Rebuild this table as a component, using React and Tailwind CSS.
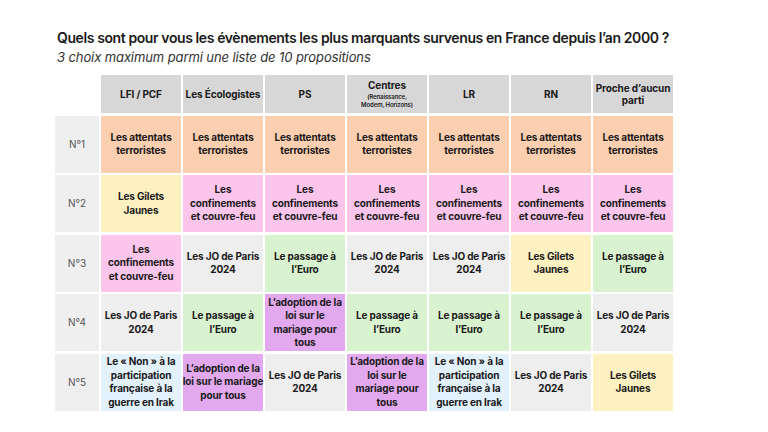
const COLS = [
  { key: "lfi", label: ["LFI / PCF"] },
  { key: "eco", label: ["Les Écologistes"] },
  { key: "ps", label: ["PS"] },
  { key: "centres", label: ["Centres"], sub: ["(Renaissance,", "Modem, Horizons)"] },
  { key: "lr", label: ["LR"] },
  { key: "rn", label: ["RN"] },
  { key: "proche", label: ["Proche d’aucun", "parti"] },
];

/* ─── Answer kinds: text lines + cell colour ───────────────── */
const A = {
  att: { lines: ["Les attentats", "terroristes"], bg: "bg-[#fdcfb1]" },
  gil: { lines: ["Les Gilets", "Jaunes"], bg: "bg-[#fef1c1]" },
  conf: { lines: ["Les", "confinements", "et couvre-feu"], bg: "bg-[#fcc5ec]" },
  jo: { lines: ["Les JO de Paris", "2024"], bg: "bg-[#eeeeee]" },
  euro: { lines: ["Le passage à", "l’Euro"], bg: "bg-[#d9f2d0]" },
  mar4: { lines: ["L’adoption de la", "loi sur le", "mariage pour", "tous"], bg: "bg-[#e3a9ee]" },
  mar3: { lines: ["L’adoption de la", "loi sur le mariage", "pour tous"], bg: "bg-[#e3a9ee]" },
  non: { lines: ["Le « Non » à la", "participation", "française à la", "guerre en Irak"], bg: "bg-[#e3f1fc]" },
};

const ROWS = [
  ["att", "att", "att", "att", "att", "att", "att"],
  ["gil", "conf", "conf", "conf", "conf", "conf", "conf"],
  ["conf", "jo", "euro", "jo", "jo", "gil", "euro"],
  ["jo", "euro", "mar4", "euro", "euro", "euro", "jo"],
  ["non", "mar3", "jo", "mar4", "non", "jo", "gil"],
];

function Lines({ lines }) {
  return lines.map((l, i) => <span key={i} className="block whitespace-nowrap">{l}</span>);
}

export default function App() {
  return (
    <div className="w-[768px] h-[432px] bg-white font-['Inter','Liberation_Sans',sans-serif] text-[#1a1a1a]">
      <div className="pl-[57px] pt-[28px]">
        <h1 className="text-[14px] leading-[20px] font-semibold tracking-[-0.4px]">
          Quels sont pour vous les évènements les plus marquants survenus en France depuis l’an 2000 ?
        </h1>
        <p className="text-[13px] leading-[18px] italic text-[#333] tracking-[-0.1px]">
          3 choix maximum parmi une liste de 10 propositions
        </p>
      </div>

      <div className="ml-[55px] mt-[9px] grid grid-cols-[44px_repeat(7,80px)] grid-rows-[38px_repeat(5,57px)] gap-x-[2px] gap-y-[2.5px] w-max">
        {/* header row */}
        <div />
        {COLS.map(c => (
          <div key={c.key} className="bg-[#d7d7d7] flex flex-col items-center justify-center text-center text-[10px] leading-[12.5px] font-bold tracking-[-0.1px]">
            <Lines lines={c.label} />
            {c.sub && (
              <div className="text-[6px] leading-[8px] font-semibold mt-[1px]">
                <Lines lines={c.sub} />
              </div>
            )}
          </div>
        ))}

        {/* answer rows */}
        {ROWS.map((row, ri) => (
          <>
            <div key={"l" + ri} className="bg-[#efefef] flex items-center justify-center text-[10px] text-[#555]">
              N°{ri + 1}
            </div>
            {row.map((k, ci) => (
              <div
                key={ri + "-" + ci}
                className={`${A[k].bg} flex flex-col items-center justify-center text-center text-[10px] leading-[13.5px] font-bold tracking-[-0.15px]`}
              >
                <Lines lines={A[k].lines} />
              </div>
            ))}
          </>
        ))}
      </div>
    </div>
  );
}
